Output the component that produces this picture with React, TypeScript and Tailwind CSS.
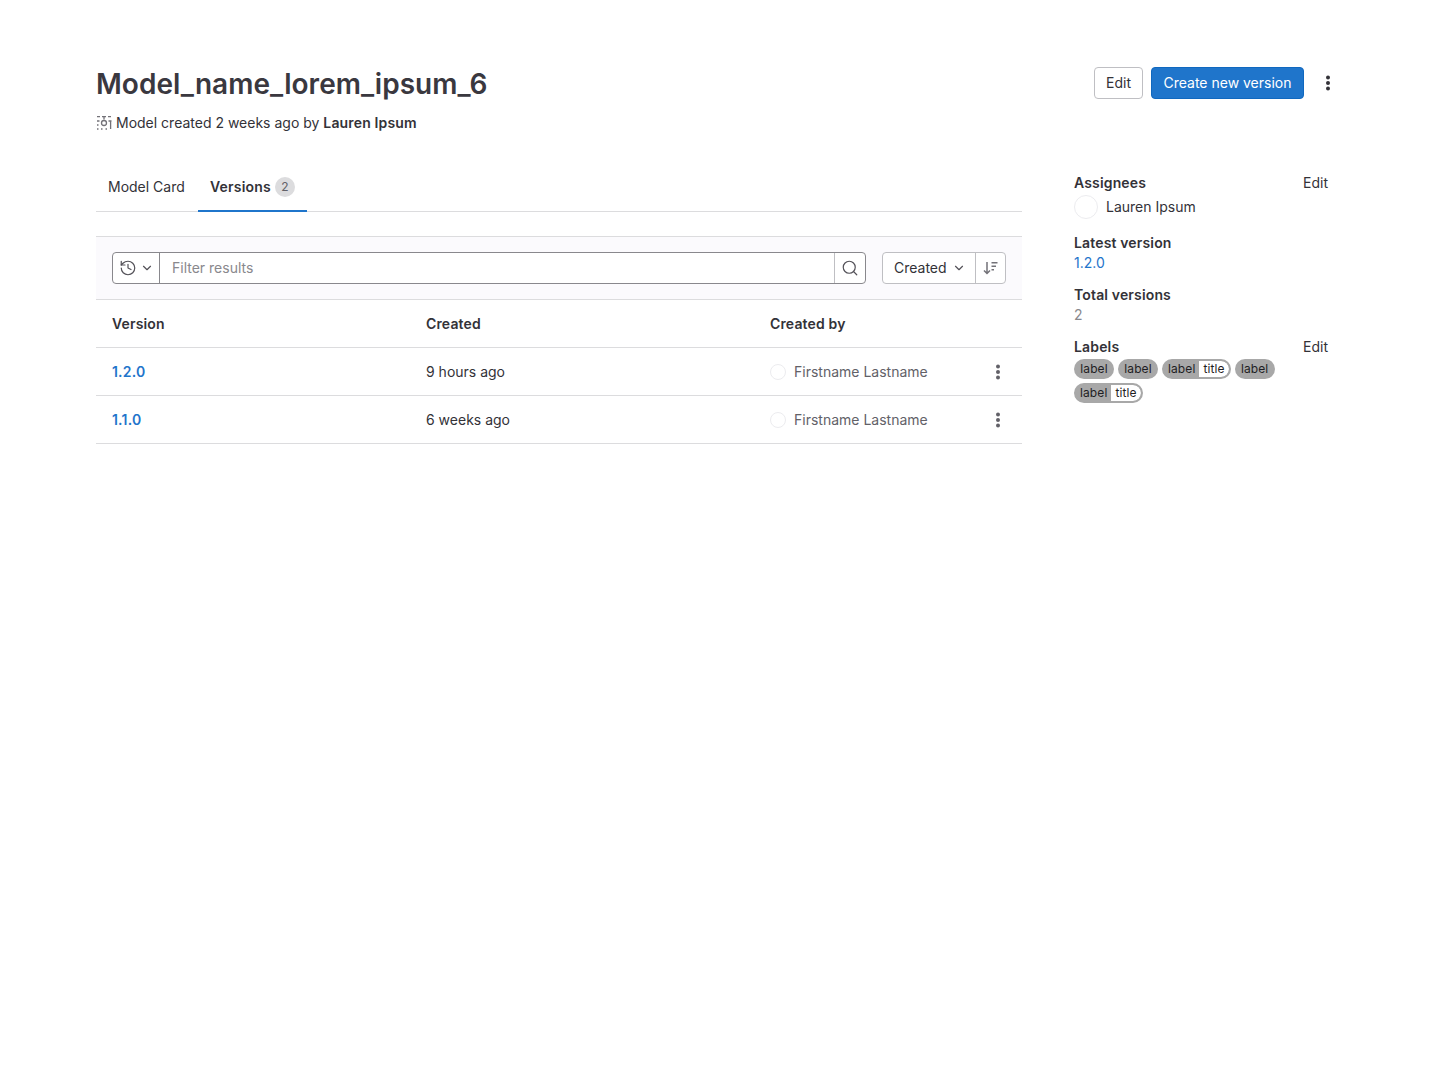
import { ChevronDown, History, Search } from "lucide-react";

const Kebab = ({ color }: { color: string }) => (
  <svg width="16" height="16" viewBox="0 0 16 16" fill={color}>
    <circle cx="8" cy="2.5" r="2" />
    <circle cx="8" cy="8" r="2" />
    <circle cx="8" cy="13.5" r="2" />
  </svg>
);

const ModelIcon = () => (
  <svg width="16" height="16" viewBox="0 0 16 16" fill="none" stroke="#737278" strokeWidth="1.3">
    <path d="M1 1.6h3M6 1.6h4M12 1.6h3M1 6h2.5M12.5 6h3M1 10h1.5M1 14h1.5M5 14h1.5M9.5 14h1.5M14.6 6.5v7.5" />
    <path d="M8 1.6v3" />
    <circle cx="8" cy="8" r="2.5" />
  </svg>
);

const SortIcon = () => (
  <svg width="16" height="16" viewBox="0 0 16 16" fill="none" stroke="#737278" strokeWidth="1.5">
    <path d="M4 2v11.5M1 10.5l3 3 3-3" />
    <path d="M8.5 2.75h6M8.5 6.25h4.5M8.5 9.75h2.5" />
  </svg>
);

const Label = ({ text }: { text: string }) => (
  <span className="h-5 w-10 text-center rounded-full bg-[#a8a8a8] text-[#1f1e24] text-xs leading-5 tracking-[0.1px]">{text}</span>
);

const ScopedLabel = () => (
  <span className="h-5 flex rounded-full bg-[#a8a8a8] text-xs leading-4 border-2 border-[#a8a8a8] overflow-hidden tracking-[0.1px]">
    <span className="pl-1 pr-1 text-[#1f1e24]">label</span>
    <span className="pl-1 pr-1 bg-white text-[#1f1e24] rounded-r-full">title</span>
  </span>
);

const rows = [
  { version: "1.2.0", created: "9 hours ago" },
  { version: "1.1.0", created: "6 weeks ago" },
];

export default function App() {
  return (
    <div className="min-h-[1080px] bg-white px-24 pt-[67px] text-sm text-[#333238] font-['Inter',sans-serif]">
      <div className="flex justify-between items-start">
        <div>
          <h1 className="text-[28px] leading-[34px] font-semibold text-[#3a383f] tracking-[0.04px]">Model_name_lorem_ipsum_6</h1>
          <div className="mt-3 flex items-center gap-1 h-5">
            <ModelIcon />
            <span>
              Model created 2 weeks ago by <span className="font-semibold tracking-[0.15px]">Lauren Ipsum</span>
            </span>
          </div>
        </div>
        <div className="flex items-center gap-2">
          <button className="h-8 w-[49px] rounded border border-[#bfbfc3] text-[#333238]">Edit</button>
          <button className="h-8 w-[153px] rounded bg-[#1f75cb] border border-[#1068bf] text-white">Create new version</button>
          <div className="w-8 h-8 flex items-center justify-center">
            <Kebab color="#333238" />
          </div>
        </div>
      </div>

      <div className="flex mt-[30px]">
        <div className="w-[926px]">
          <div className="flex border-b border-[#dcdcde] h-[49px]">
            <div className="w-[102px] pl-3 h-[48px] flex items-center">Model Card</div>
            <div className="px-3 h-[49px] flex items-center gap-1 border-b-2 border-[#1f75cb]">
              <span className="font-semibold tracking-[0.2px]">Versions</span>
              <span className="w-5 h-5 rounded-full bg-[#dcdcde] text-xs text-[#626168] flex items-center justify-center">2</span>
            </div>
          </div>

          <div className="mt-6 h-16 p-4 flex bg-[#fbfafd] border-y border-[#dcdcde] items-center">
            <div className="flex-1 h-8 flex bg-white rounded border border-[#89888d]">
              <div className="w-[47px] flex items-center justify-center gap-[3px] border-r border-[#89888d] shrink-0">
                <History size={18} color="#535158" strokeWidth={1.6} />
                <ChevronDown size={14} color="#535158" />
              </div>
              <div className="flex-1 px-3 flex items-center text-[#89888d]">Filter results</div>
              <div className="w-[31px] flex items-center justify-center border-l border-[#bfbfc3] shrink-0">
                <Search size={18} color="#535158" strokeWidth={1.6} />
              </div>
            </div>
            <div className="ml-4 h-8 w-[124px] flex bg-white rounded border border-[#bfbfc3]">
              <div className="flex-1 flex items-center pl-[11px] gap-[5px]">
                <span>Created</span>
                <ChevronDown size={14} color="#535158" />
              </div>
              <div className="w-[30px] flex items-center justify-center border-l border-[#bfbfc3]">
                <SortIcon />
              </div>
            </div>
          </div>

          <div className="h-12 flex items-center border-b border-[#dcdcde] font-semibold tracking-[0.15px]">
            <div className="w-[314px] pl-4">Version</div>
            <div className="w-[344px] pl-4">Created</div>
            <div className="pl-4">Created by</div>
          </div>
          {rows.map((row) => (
            <div key={row.version} className="h-12 flex items-center border-b border-[#dcdcde]">
              <div className="w-[314px] pl-4 font-semibold text-[#1f75cb] tracking-[0.2px]">{row.version}</div>
              <div className="w-[344px] pl-4">{row.created}</div>
              <div className="flex-1 pl-4 flex items-center gap-2 text-[#626168]">
                <span className="w-4 h-4 rounded-full border border-[#ececef]" />
                <span>Firstname Lastname</span>
              </div>
              <div className="w-12 flex justify-center">
                <Kebab color="#626168" />
              </div>
            </div>
          ))}
        </div>

        <div className="w-[254px] ml-[52px] pt-[10px]">
          <div className="flex justify-between h-5 items-center">
            <span className="font-semibold tracking-[0.15px]">Assignees</span>
            <span>Edit</span>
          </div>
          <div className="mt-[2px] flex items-center gap-2 h-6">
            <span className="w-6 h-6 rounded-full border border-[#ececef]" />
            <span>Lauren Ipsum</span>
          </div>
          <div className="mt-[14px] font-semibold leading-5 tracking-[0.15px]">Latest version</div>
          <div className="leading-5 text-[#1f75cb]">1.2.0</div>
          <div className="mt-3 font-semibold leading-5 tracking-[0.15px]">Total versions</div>
          <div className="leading-5 text-[#89888d]">2</div>
          <div className="mt-3 flex justify-between leading-5">
            <span className="font-semibold tracking-[0.15px]">Labels</span>
            <span>Edit</span>
          </div>
          <div className="mt-[2px] flex flex-wrap gap-1 w-[210px]">
            <Label text="label" />
            <Label text="label" />
            <ScopedLabel />
            <Label text="label" />
            <ScopedLabel />
          </div>
        </div>
      </div>
    </div>
  );
}
